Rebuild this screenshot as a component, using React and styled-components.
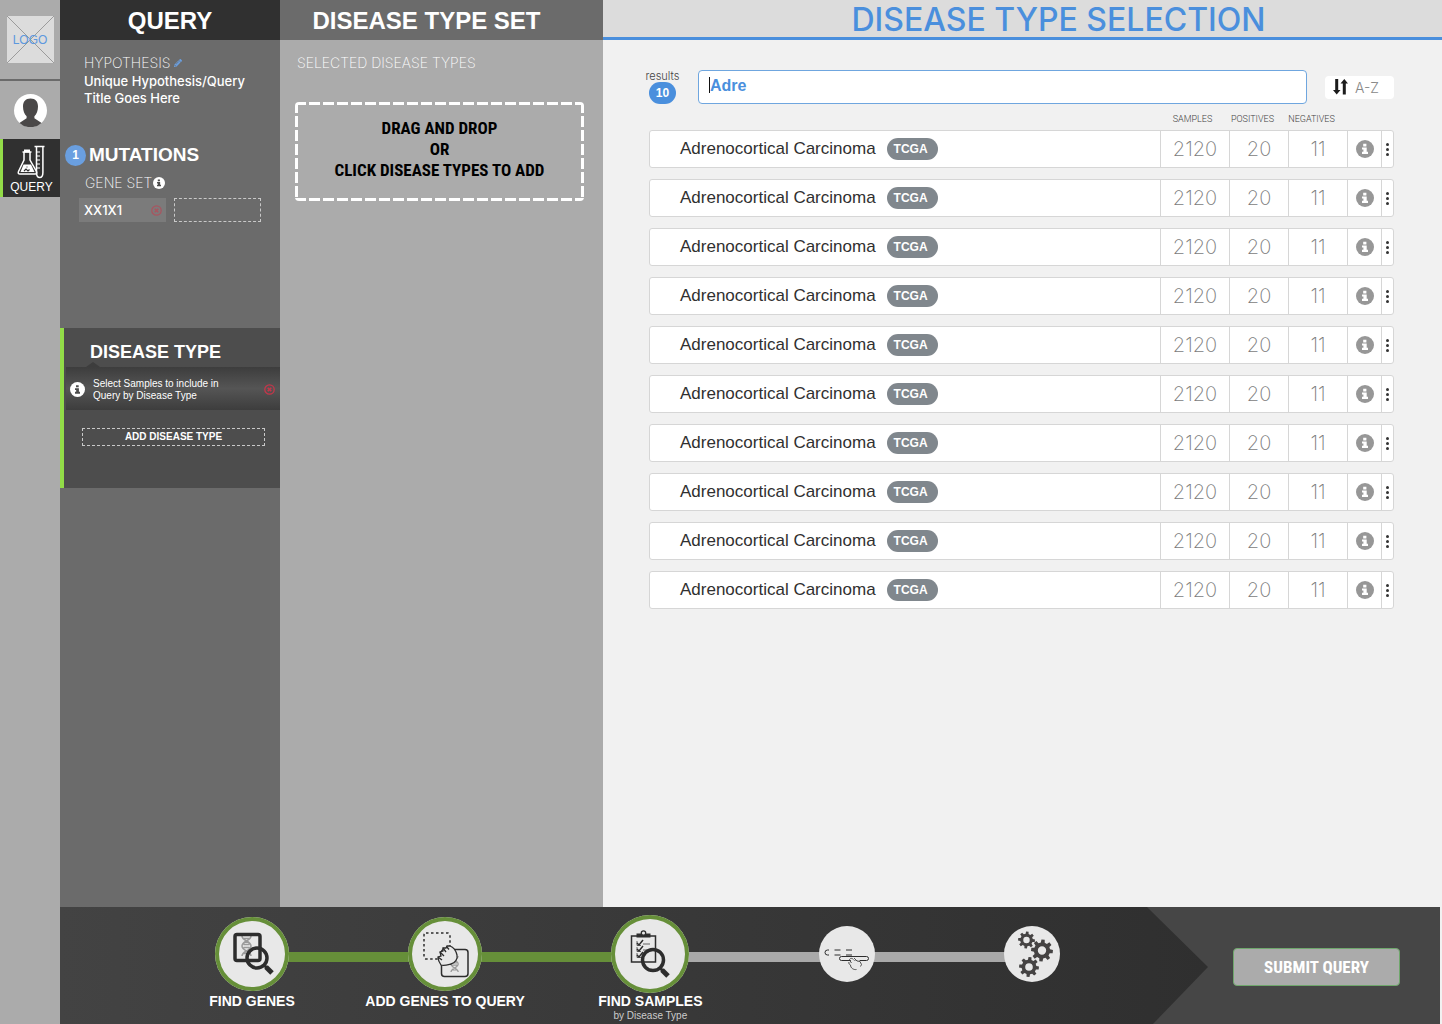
import React from "react";
import styled, { createGlobalStyle, css } from "styled-components";
import { FaPencilAlt } from "react-icons/fa";

const color = {
  ink: "#303030",
  panel: "#6b6b6b",
  panelDark: "#4d4d4d",
  rail: "#ababab",
  blue: "#4a8fdd",
  lime: "#92dc48",
  green: "#668f39",
  canvas: "#f1f1f1",
  line: "#d6d6d6",
};

const sans = `"Liberation Sans", Arial, sans-serif`;
const light = `Inter, "Liberation Sans", sans-serif`;
const condensed = `"Roboto Condensed", Roboto, sans-serif`;

const GlobalStyle = createGlobalStyle`
  *, *::before, *::after { box-sizing: border-box; }
  body { margin: 0; background: ${color.canvas}; font-family: ${sans}; }
  h1, h2, h3, p, ol { margin: 0; padding: 0; }
  ol { list-style: none; }
  button { padding: 0; border: 0; background: none; font: inherit; color: inherit; cursor: pointer; }
  svg { display: block; flex: none; }
`;

/* ---------- page frame ---------- */

const Page = styled.div`
  display: flex;
  min-height: 100vh;
`;

const Workspace = styled.div`
  display: flex;
  flex: 1;
  flex-direction: column;
  min-width: 0;
`;

const Columns = styled.div`
  display: flex;
  flex: 1;
`;

/* ---------- left rail ---------- */

const Rail = styled.nav`
  width: 60px;
  flex: none;
  background: ${color.rail};
`;

const LogoLink = styled.a`
  display: flex;
  justify-content: center;
  height: 81px;
  padding-top: 16px;
  border-bottom: 2px solid ${color.panel};
`;

const ProfileButton = styled.button`
  display: block;
  width: 100%;
  padding: 13px 0 12px 14px;
`;

const RailItem = styled.a`
  display: flex;
  flex-direction: column;
  align-items: center;
  height: 58px;
  padding-top: 6px;
  border-left: 3px solid ${color.lime};
  background: ${color.ink};
  color: #fff;
  font-size: 12px;
  line-height: 16px;
  text-decoration: none;
`;

/* ---------- query column ---------- */

const QueryPanel = styled.aside`
  width: 220px;
  flex: none;
  background: ${color.panel};
  color: #fff;
`;

const PanelTitle = styled.h2`
  height: 40px;
  padding-right: ${(p) => p.$inset}px;
  background: ${(p) => p.$tone};
  color: #fff;
  font-size: 24px;
  font-weight: 700;
  line-height: 41px;
  text-align: center;
`;

const Caption = styled.p`
  display: flex;
  align-items: center;
  gap: ${(p) => p.$gap || 0}px;
  color: #fff;
  font-family: ${light};
  font-size: 14px;
  font-weight: 200;
  line-height: 20px;
`;

const Hypothesis = styled.section`
  height: 104px;
  padding: 13px 24px 0;
`;

const HypothesisTitle = styled.h3`
  font-family: ${light};
  font-size: 13px;
  font-weight: 500;
  line-height: 17px;
`;

const EditButton = styled.button`
  color: #6a9fe0;
`;

const Mutations = styled.section`
  height: 184px;
`;

const MutationsTitle = styled.h3`
  display: flex;
  align-items: center;
  gap: 3px;
  padding-left: 5px;
  font-size: 19px;
  line-height: 22px;
`;

const StepNumber = styled.span`
  width: 21px;
  height: 21px;
  border-radius: 50%;
  background: #6a9fe0;
  font-size: 12px;
  line-height: 21px;
  text-align: center;
`;

const GeneSet = styled.div`
  display: flex;
  flex-direction: column;
  gap: 5px;
  padding: 7px 19px 0;
`;

const GeneCaption = styled(Caption)`
  padding-left: 6px;
`;

const GeneSlots = styled.div`
  display: grid;
  grid-template-columns: 1fr 1fr;
  gap: 8px;
`;

const GeneChip = styled.div`
  display: flex;
  align-items: center;
  justify-content: space-between;
  height: 24px;
  padding: 0 4px 0 5px;
  background: #7b7b7b;
  font-family: ${light};
  font-size: 13px;
  font-weight: 500;
`;

const dashed = css`
  border: 1px dashed #c9c9c9;
`;

const GeneSlot = styled.button`
  ${dashed}
  height: 24px;
`;

const RemoveButton = styled.button`
  color: ${(p) => p.$tone};
`;

const DiseaseSection = styled.section`
  display: flex;
  flex-direction: column;
  height: 160px;
  border-left: 4px solid ${color.lime};
  background: ${color.panelDark};
`;

const DiseaseTitle = styled.h3`
  height: 39px;
  padding: 3px 0 0 26px;
  font-size: 18px;
  line-height: 42px;
`;

const Hint = styled.div`
  position: relative;
  display: flex;
  align-items: center;
  gap: 8px;
  height: 43px;
  margin-left: 2px;
  padding: 2px 5px 0 4px;
  background: linear-gradient(#3d3d3d, #555 50%, #3d3d3d);

  &::before {
    content: "";
    position: absolute;
    left: 20px;
    top: -5px;
    border: solid transparent;
    border-width: 0 7px 5px;
    border-bottom-color: #3d3d3d;
  }
`;

const HintText = styled.p`
  flex: 1;
  font-size: 10px;
  line-height: 12px;
`;

const AddButton = styled.button`
  ${dashed}
  height: 18px;
  margin: 18px 15px 0 18px;
  font-size: 10px;
  font-weight: 700;
  line-height: 16px;
`;

/* ---------- disease type set column ---------- */

const SetPanel = styled.section`
  width: 323px;
  flex: none;
  background: ${color.rail};
`;

const SetBody = styled.div`
  display: flex;
  flex-direction: column;
  gap: 29px;
  padding: 13px 19px 0 15px;
`;

const SetCaption = styled(Caption)`
  padding-left: 2px;
`;

const dashRow = "repeating-linear-gradient(90deg, #fff 0 11px, transparent 11px 14px)";
const dashColumn = "repeating-linear-gradient(#fff 0 11px, transparent 11px 14px)";

const DropZone = styled.div`
  height: 99px;
  padding-top: 16px;
  border-radius: 4px;
  background: ${dashRow} top / 100% 3px no-repeat, ${dashRow} bottom / 100% 3px no-repeat,
    ${dashColumn} left / 3px 100% no-repeat, ${dashColumn} right / 3px 100% no-repeat;
  color: #000;
  font-family: ${condensed};
  font-size: 17px;
  font-weight: 700;
  line-height: 21px;
  text-align: center;
`;

/* ---------- selection column ---------- */

const Selection = styled.main`
  flex: 1;
  min-width: 0;
  background: ${color.canvas};
`;

const SelectionTitle = styled.h1`
  height: 40px;
  padding-left: 72px;
  border-bottom: 3px solid ${color.blue};
  background: #dcdcdc;
  color: ${color.blue};
  font-family: ${light};
  font-size: 32px;
  font-weight: 500;
  line-height: 40px;
  text-align: center;
`;

const SelectionBody = styled.div`
  padding: 30px 48px 0 46px;
`;

const SearchRow = styled.form`
  display: flex;
  align-items: center;
`;

const Results = styled.div`
  display: flex;
  flex-direction: column;
  align-items: center;
  width: 27px;
  margin-right: 22px;
  color: #444;
  font-family: ${light};
  font-size: 11px;
  font-weight: 300;
  line-height: 12px;
`;

const ResultCount = styled.output`
  width: 27px;
  height: 22px;
  border-radius: 11px;
  background: ${color.blue};
  color: #fff;
  font-family: ${sans};
  font-size: 12px;
  font-weight: 700;
  line-height: 22px;
  text-align: center;
`;

const SearchField = styled.label`
  position: relative;
  flex: 1;
  margin-right: 18px;
`;

const SearchInput = styled.input`
  display: block;
  width: 100%;
  height: 34px;
  padding: 0 11px 2px;
  border: 1px solid #6fa6df;
  border-radius: 4px;
  outline: 0;
  background: #fff;
  color: ${color.blue};
  font-family: ${sans};
  font-size: 16px;
  font-weight: 700;
`;

const Caret = styled.span`
  position: absolute;
  left: 11px;
  top: 7px;
  width: 1px;
  height: 16px;
  background: #111;
`;

const SortButton = styled.button`
  display: flex;
  align-items: center;
  gap: 7px;
  width: 69px;
  height: 23px;
  padding-left: 8px;
  border-radius: 4px;
  background: #fff;
  color: #888;
  font-family: ${light};
  font-size: 14px;
  font-weight: 300;
`;

const Table = styled.table`
  display: block;
  margin-top: 9px;
`;

const tableGrid = css`
  display: grid;
  grid-template-columns: 1fr 69px 59px 59px 34px 12px;
`;

const Head = styled.thead`
  display: block;
  padding: 0 1px;
`;

const HeadRow = styled.tr`
  ${tableGrid}
`;

const HeadCell = styled.th`
  padding: 0 ${(p) => p.$inset || 0}px 0 0;
  color: #444;
  font-family: Roboto, sans-serif;
  font-size: 9px;
  font-weight: 300;
  line-height: 12px;
  text-align: center;
`;

const Body = styled.tbody`
  display: grid;
  gap: 11px;
  padding-top: 5px;
`;

const Row = styled.tr`
  ${tableGrid}
  height: 38px;
  border: 1px solid ${color.line};
  border-radius: 3px;
  background: #fff;
`;

const NameCell = styled.td`
  display: flex;
  align-items: center;
  gap: 11px;
  padding: 0 0 1px 30px;
  color: #303030;
  font-size: 17px;
`;

const Tag = styled.span`
  width: 51px;
  height: 22px;
  padding-right: 3px;
  border-radius: 11px;
  background: #80878d;
  color: #fff;
  font-size: 12px;
  font-weight: 700;
  line-height: 22px;
  text-align: center;
`;

const Cell = styled.td`
  display: flex;
  align-items: center;
  justify-content: center;
  padding: 0;
  border-left: 1px solid ${color.line};
`;

const Count = styled(Cell)`
  color: #7c7c7c;
  font-family: ${light};
  font-size: 20px;
  font-weight: 200;
`;

const InfoButton = styled.button`
  color: #979797;
`;

const MenuButton = styled.button`
  display: flex;
  flex-direction: column;
  gap: 2px;
`;

const Dot = styled.span`
  width: 3px;
  height: 3px;
  border-radius: 50%;
  background: #333;
`;

/* ---------- footer ---------- */

const Footer = styled.footer`
  display: flex;
  height: 117px;
  margin-right: 2px;
  background: #464646;
`;

const Progress = styled.ol`
  display: flex;
  flex: 1;
  padding: 8px 148px 0 155px;
  background: linear-gradient(90deg, #434343, #2f2f2f);
  clip-path: polygon(0 0, calc(100% - 61px) 0, 100% 60px, calc(100% - 55px) 100%, 0 100%);
`;

const Stage = styled.li`
  display: flex;
  flex: ${(p) => p.$reach} 0 auto;
`;

const StageMark = styled.div`
  display: flex;
  flex-direction: column;
  align-items: center;
  width: ${(p) => p.$size}px;
  white-space: nowrap;
`;

const DiscSlot = styled.div`
  display: flex;
  align-items: center;
  height: 78px;
`;

const Disc = styled.div`
  position: relative;
  z-index: 1;
  width: ${(p) => p.$size}px;
  height: ${(p) => p.$size}px;
  border-radius: 50%;
  background: #e8e8e8;
  box-shadow: ${(p) => (p.$done ? `inset 0 0 0 4px ${color.green}` : "none")};
`;

const StageLabel = styled.span`
  color: #fff;
  font-size: 14px;
  font-weight: 700;
  line-height: 17px;
`;

const StageNote = styled.span`
  color: #ccc;
  font-size: 10px;
  line-height: 12px;
`;

const Connector = styled.span`
  flex: 1;
  height: 10px;
  margin: 37px -2px 0;
  background: ${(p) => (p.$done ? color.green : "#a9a9a9")};
`;

const SubmitArea = styled.div`
  display: flex;
  width: 232px;
  padding: 41px 40px 0 25px;
`;

const SubmitButton = styled.button`
  flex: 1;
  height: 38px;
  border: 1px solid #6fa76c;
  border-radius: 4px;
  background: #ababab;
  color: #fff;
  font-family: ${condensed};
  font-size: 17px;
  font-weight: 700;
`;

/* ---------- drawings ---------- */

const LogoArt = () => (
  <svg width="47" height="47" viewBox="0 0 47 47" role="img" aria-label="Logo">
    <rect width="47" height="47" fill="#dcdcdc" />
    <path d="M0 0 47 47M47 0 0 47" stroke="#9b9b9b" />
    <text x="23" y="28" textAnchor="middle" fontFamily={sans} fontSize="12" fill="#5c98de">
      LOGO
    </text>
  </svg>
);

const Avatar = () => (
  <svg width="33" height="33" viewBox="0 0 33 33" aria-hidden="true">
    <circle cx="16.5" cy="16.5" r="16.5" fill="#fff" />
    <path
      d="M16.5 4.500c5 0 7.500 3.200 7.500 8 0 4.200-1.400 8-3.600 9.700v2.100l7.200 4.600A16.500 16.500 0 0 1 5.400 28.900l7.200-4.600v-2.100C10.400 20.500 9 16.700 9 12.500c0-4.800 2.500-8 7.500-8Z"
      fill="#4a4848"
    />
  </svg>
);

const Flasks = () => (
  <svg width="30" height="34" viewBox="0 0 30 34" fill="none" stroke="#fff" strokeWidth="1.5" aria-hidden="true">
    <path d="M5.500 7h9M7 7v8L1.500 26.500q-1 2.500 1.500 2.500h15q2.500 0 1.500-2.500L13 15V7" />
    <path d="M7 6h6" strokeWidth="3" />
    <path d="M6.500 19.500h7.500l3.500 7.500H3.500Z" fill="#fff" stroke="none" />
    <path d="M7 26l2-2 2 2 1.500-1.500M9.500 22h1" stroke="#303030" strokeWidth="1.2" />
    <path d="M17.500 1.500h10M19.500 1.500v26q0 5 3.200 5t3.200-5v-26" />
    <path d="M20 7h3M20 11h3M20 15h3M20 19h3M20 23h3" strokeWidth="1" />
  </svg>
);

const InfoIcon = ({ size }) => (
  <svg width={size} height={size} viewBox="0 0 18 18" aria-hidden="true">
    <circle cx="9" cy="9" r="9" fill="currentColor" />
    <path d="M7.200 3.800h3.200v2.600H7.200ZM6 7.500h4.700v4.300H12v2.200H6v-2.200h1.400V9.600H6Z" fill={size > 16 ? "#fff" : "#4d4d4d"} />
  </svg>
);

const CrossCircle = () => (
  <svg width="11" height="11" viewBox="0 0 11 11" fill="none" stroke="currentColor" aria-hidden="true">
    <circle cx="5.5" cy="5.5" r="4.7" strokeWidth="1.3" />
    <path d="M3.700 3.700 7.300 7.300M7.300 3.700 3.700 7.300" strokeWidth="1.6" />
  </svg>
);

const SortArrows = () => (
  <svg width="15" height="16" viewBox="0 0 15 16" fill="#1c1c1c" aria-hidden="true">
    <path d="M2.200 0h3v11h2.300L3.700 15.500 0 11h2.200Z" />
    <path d="M9.800 15.500h3v-11H15L11.300 0 7.500 4.500h2.300Z" />
  </svg>
);

const strand = "M0 0c0 5 9 5 9 10s-9 5-9 10M9 0c0 5-9 5-9 10s9 5 9 10M1 2.500h7M1 17.500h7M1.500 8.500h6M1.500 11.500h6";

const FindGenesArt = () => (
  <svg width="74" height="74" viewBox="0 0 74 74" fill="none" stroke="#2d2d2d" aria-hidden="true">
    <path d={strand} transform="translate(27 19)" stroke="#9a9a9a" strokeWidth="1.5" />
    <rect x="20" y="17.5" width="25" height="26" rx="2" strokeWidth="3.5" />
    <circle cx="42" cy="41" r="10" strokeWidth="3.5" />
    <path d="m49 48 3 3" strokeWidth="3" />
    <path d="m51 50 6 6" strokeWidth="5" />
  </svg>
);

const AddGenesArt = () => (
  <svg width="74" height="74" viewBox="0 0 74 74" fill="none" stroke="#2d2d2d" aria-hidden="true">
    <rect x="16" y="16" width="26" height="26" rx="2" strokeWidth="1.5" strokeDasharray="2.5 2.5" />
    <path d={strand} transform="translate(43 39) scale(.8)" stroke="#9a9a9a" strokeWidth="1.5" />
    <rect x="33.5" y="32.5" width="26.5" height="27" rx="3" strokeWidth="1.5" />
    <path
      d="M33 48c-2-3-3-5-3-8l3-1-1-4 3-1 0-3 3 0 1-2 3 0c3 1 6 5 7 9 1 4-2 8-6 9-4 1-7 2-10 1Z"
      fill="#e8e8e8"
      strokeWidth="1.3"
    />
    <path d="m30 40 4 3M32 35l4 4M35 31l3 4M38.500 29.500l2.500 3" strokeWidth="1.3" />
  </svg>
);

const FindSamplesArt = () => (
  <svg width="78" height="78" viewBox="0 0 78 78" fill="none" stroke="#2d2d2d" aria-hidden="true">
    <rect x="20.5" y="21" width="24" height="26" strokeWidth="1.5" />
    <path d="M25.500 18.500h14v4h-14Z" fill="#2d2d2d" stroke="none" />
    <circle cx="32.5" cy="18" r="2.2" fill="#e8e8e8" strokeWidth="1.3" />
    <path d="m26 28 2 2 4-5M26 34l2 2 4-5M26 40l2 2 4-5" strokeWidth="1.5" />
    <path d="M26 26v4.500h4M26 32v4.500h4M26 38v4.500h4" strokeWidth=".7" />
    <path d="M32 29h7M32 35h5" stroke="#a5a5a5" strokeWidth="2" />
    <circle cx="42" cy="45" r="10.5" strokeWidth="3.5" />
    <path d="m49 53 3 3" strokeWidth="3" />
    <path d="m51 55 6 6" strokeWidth="5" />
  </svg>
);

const MatchArt = () => (
  <svg width="56" height="56" viewBox="0 0 56 56" fill="none" stroke="#2d2d2d" aria-hidden="true">
    <path d="M10 24H8.500Q6 24 6 26.500T8.500 29H10M15.500 24h6M15.500 29h6M27 24h6M27 29h6" />
    <rect x="20.5" y="30.5" width="29" height="4" rx="2" />
    <path d="M29.500 37c2 0 3 1 4 1l-2-4c-.5-2 2-2.500 3-.5l.5 1 5-.5c2 1 3 4 2.500 6.500L38 43.500c-3 .5-6-1.500-6.500-4Z" fill="#e8e8e8" stroke="none" />
    <path d="M30 36c-1 2 1 2 1.500 3 0 3 3 5 6 4.500M32.500 37l-2-3c0-1.500 2-2.500 4-.5M35 32l3 3 3 .5 1.500 3-1 2" strokeWidth=".8" />
  </svg>
);

const gearPath = (cx, cy, r) => {
  const teeth = 8;
  const pitch = (Math.PI * 2) / teeth;
  const at = (angle, radius) =>
    `${(cx + Math.cos(angle) * radius).toFixed(2)} ${(cy + Math.sin(angle) * radius).toFixed(2)}`;
  const points = Array.from({ length: teeth }, (_, i) => {
    const a = i * pitch + 0.1;
    return [at(a - 0.24, r * 0.74), at(a - 0.15, r), at(a + 0.15, r), at(a + 0.24, r * 0.74)].join("L");
  });
  const hole = r * 0.38;
  return `M${points.join("L")}ZM${cx - hole} ${cy}a${hole} ${hole} 0 1 0 ${hole * 2} 0a${hole} ${hole} 0 1 0 ${-hole * 2} 0Z`;
};

const GearsArt = () => (
  <svg width="56" height="56" viewBox="0 0 56 56" fill="#454343" fillRule="evenodd" aria-hidden="true">
    <path d={gearPath(22.5, 14, 8.5)} />
    <path d={gearPath(38, 24.5, 11)} />
    <path d={gearPath(25, 41, 10)} />
  </svg>
);

/* ---------- data ---------- */

const diseases = Array.from({ length: 10 }, (_, i) => ({
  id: i,
  name: "Adrenocortical Carcinoma",
  source: "TCGA",
  samples: 2120,
  positives: 20,
  negatives: 11,
}));

const stages = [
  { name: "Find genes", label: "FIND GENES", art: <FindGenesArt />, size: 74, reach: 12, done: true, linked: true },
  { name: "Add genes", label: "ADD GENES TO QUERY", art: <AddGenesArt />, size: 74, reach: 13, done: true, linked: true },
  { name: "Find samples", label: "FIND SAMPLES", note: "by Disease Type", art: <FindSamplesArt />, size: 78, reach: 13, done: true },
  { name: "Match", art: <MatchArt />, size: 56, reach: 13 },
  { name: "Process", art: <GearsArt />, size: 56, reach: 0 },
];

function DiseaseRow({ disease }) {
  return (
    <Row>
      <NameCell>
        {disease.name}
        <Tag>{disease.source}</Tag>
      </NameCell>
      <Count>{disease.samples}</Count>
      <Count>{disease.positives}</Count>
      <Count>{disease.negatives}</Count>
      <Cell>
        <InfoButton type="button" aria-label="Details">
          <InfoIcon size={18} />
        </InfoButton>
      </Cell>
      <Cell>
        <MenuButton type="button" aria-label="More actions">
          <Dot />
          <Dot />
          <Dot />
        </MenuButton>
      </Cell>
    </Row>
  );
}

export default function App() {
  return (
    <Page>
      <GlobalStyle />
      <Rail>
        <LogoLink href="#home">
          <LogoArt />
        </LogoLink>
        <ProfileButton type="button" aria-label="Profile">
          <Avatar />
        </ProfileButton>
        <RailItem href="#query">
          <Flasks />
          QUERY
        </RailItem>
      </Rail>

      <Workspace>
        <Columns>
          <QueryPanel>
            <PanelTitle $tone={color.ink} $inset={0}>QUERY</PanelTitle>
            <Hypothesis>
              <Caption $gap={4}>
                HYPOTHESIS
                <EditButton type="button" aria-label="Edit hypothesis">
                  <FaPencilAlt size={8} />
                </EditButton>
              </Caption>
              <HypothesisTitle>
                Unique Hypothesis/Query
                <br />
                Title Goes Here
              </HypothesisTitle>
            </Hypothesis>
            <Mutations>
              <MutationsTitle>
                <StepNumber>1</StepNumber>
                MUTATIONS
              </MutationsTitle>
              <GeneSet>
                <GeneCaption $gap={1}>
                  GENE SET
                  <InfoIcon size={12} />
                </GeneCaption>
                <GeneSlots>
                  <GeneChip>
                    XX1X1
                    <RemoveButton type="button" $tone="#a85560" aria-label="Remove XX1X1">
                      <CrossCircle />
                    </RemoveButton>
                  </GeneChip>
                  <GeneSlot type="button" aria-label="Add gene" />
                </GeneSlots>
              </GeneSet>
            </Mutations>
            <DiseaseSection>
              <DiseaseTitle>DISEASE TYPE</DiseaseTitle>
              <Hint>
                <InfoIcon size={15} />
                <HintText>
                  Select Samples to include in
                  <br />
                  Query by Disease Type
                </HintText>
                <RemoveButton type="button" $tone="#c4364a" aria-label="Dismiss hint">
                  <CrossCircle />
                </RemoveButton>
              </Hint>
              <AddButton type="button">ADD DISEASE TYPE</AddButton>
            </DiseaseSection>
          </QueryPanel>

          <SetPanel>
            <PanelTitle $tone={color.panel} $inset={30}>DISEASE TYPE SET</PanelTitle>
            <SetBody>
              <SetCaption>SELECTED DISEASE TYPES</SetCaption>
              <DropZone>
                DRAG AND DROP
                <br />
                OR
                <br />
                CLICK DISEASE TYPES TO ADD
              </DropZone>
            </SetBody>
          </SetPanel>

          <Selection>
            <SelectionTitle>DISEASE TYPE SELECTION</SelectionTitle>
            <SelectionBody>
              <SearchRow>
                <Results>
                  results
                  <ResultCount>10</ResultCount>
                </Results>
                <SearchField>
                  <SearchInput type="text" defaultValue="Adre" aria-label="Search disease types" />
                  <Caret />
                </SearchField>
                <SortButton type="button">
                  <SortArrows />
                  A-Z
                </SortButton>
              </SearchRow>
              <Table>
                <Head>
                  <HeadRow>
                    <HeadCell aria-label="Disease type" />
                    <HeadCell $inset={4}>SAMPLES</HeadCell>
                    <HeadCell $inset={12}>POSITIVES</HeadCell>
                    <HeadCell $inset={12}>NEGATIVES</HeadCell>
                    <HeadCell aria-label="Details" />
                    <HeadCell aria-label="Actions" />
                  </HeadRow>
                </Head>
                <Body>
                  {diseases.map((disease) => (
                    <DiseaseRow key={disease.id} disease={disease} />
                  ))}
                </Body>
              </Table>
            </SelectionBody>
          </Selection>
        </Columns>

        <Footer>
          <Progress>
            {stages.map((stage) => (
              <Stage key={stage.name} $reach={stage.reach}>
                <StageMark $size={stage.size}>
                  <DiscSlot>
                    <Disc $size={stage.size} $done={stage.done}>
                      {stage.art}
                    </Disc>
                  </DiscSlot>
                  {stage.label && <StageLabel>{stage.label}</StageLabel>}
                  {stage.note && <StageNote>{stage.note}</StageNote>}
                </StageMark>
                {stage.reach > 0 && <Connector $done={stage.linked} />}
              </Stage>
            ))}
          </Progress>
          <SubmitArea>
            <SubmitButton type="button">SUBMIT QUERY</SubmitButton>
          </SubmitArea>
        </Footer>
      </Workspace>
    </Page>
  );
}
